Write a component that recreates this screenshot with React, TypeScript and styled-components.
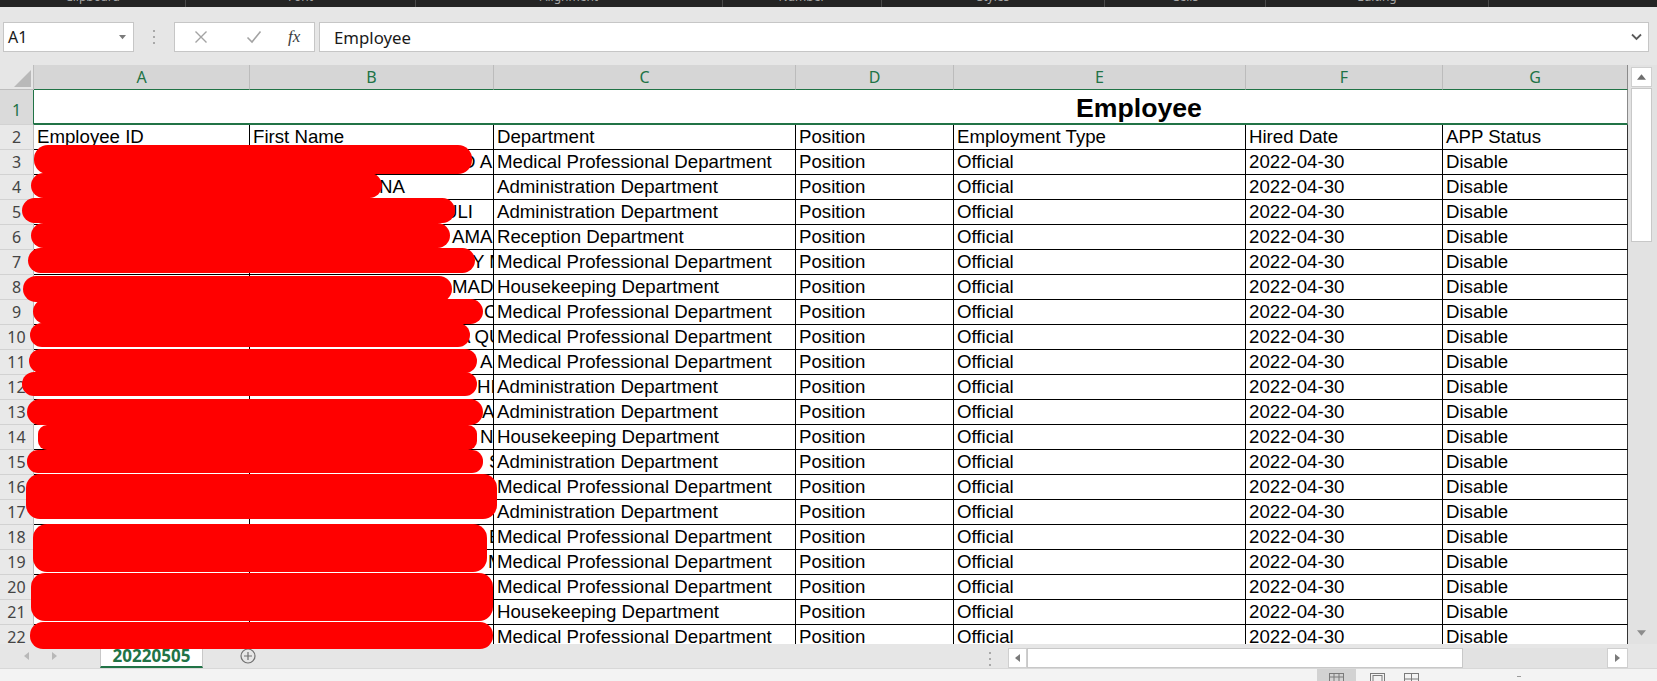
import React from "react";
import styled, { createGlobalStyle } from "styled-components";

const UI = `"Noto Sans", "Open Sans", sans-serif`;
const CELL = `"Liberation Sans", Arial, sans-serif`;
const GREEN = "#217346";
const COLS = [34, 216, 244, 302, 158, 292, 197, 185];
const GRID_COLS = COLS.map((c) => `${c}px`).join(" ");

const GlobalStyle = createGlobalStyle`
  html, body { margin: 0; padding: 0; background: #e6e6e6; overflow: hidden; }
  body { font-family: ${CELL}; }
`;

const Window = styled.div`
  position: relative;
  width: 1657px;
  height: 681px;
  overflow: hidden;
  background: #e6e6e6;
  display: flex;
  flex-direction: column;
`;

/* ---------- ribbon remnant ---------- */
const RibbonStrip = styled.div`
  flex: none;
  height: 7px;
  background: #242424;
  display: flex;
  overflow: hidden;
`;
const RibbonGroup = styled.div<{ $w: number }>`
  flex: none;
  width: ${(p) => p.$w}px;
  box-sizing: border-box;
  border-right: 1px solid #4a4a4a;
  display: flex;
  justify-content: center;
`;
const RibbonLabel = styled.span`
  font: 12px/14px ${UI};
  color: #a6a6a6;
  margin-top: -10px;
`;

/* ---------- formula bar ---------- */
const FormulaBar = styled.div`
  flex: none;
  height: 58px;
  box-sizing: border-box;
  padding: 15px 8px 0 3px;
  display: flex;
  align-items: flex-start;
`;
const NameBox = styled.div`
  flex: none;
  width: 131px;
  height: 30px;
  box-sizing: border-box;
  background: #fff;
  border: 1px solid #c6c6c6;
  display: flex;
  align-items: center;
  justify-content: space-between;
  padding: 0 7px 0 4px;
  font: 16px ${UI};
  color: #1a1a1a;
`;
const Splitter = styled.div<{ $w: number }>`
  flex: none;
  width: ${(p) => p.$w}px;
  height: 30px;
  display: flex;
  align-items: center;
  justify-content: center;
`;
const FnBox = styled.div`
  flex: none;
  width: 141px;
  height: 30px;
  box-sizing: border-box;
  background: #fff;
  border: 1px solid #c6c6c6;
  display: flex;
  align-items: center;
  padding-left: 19px;
`;
const FnSlot = styled.div<{ $w: number }>`
  flex: none;
  width: ${(p) => p.$w}px;
  display: flex;
  align-items: center;
`;
const FxLabel = styled.span`
  font: italic 17px "Liberation Serif", "Times New Roman", serif;
  color: #3c3c3c;
`;
const FormulaInput = styled.div`
  flex: 1;
  margin-left: 4px;
  height: 30px;
  box-sizing: border-box;
  background: #fff;
  border: 1px solid #c6c6c6;
  display: flex;
  align-items: center;
  justify-content: space-between;
  padding: 0 6px 0 14px;
  font: 16.8px ${UI};
  color: #1a1a1a;
`;

/* ---------- sheet ---------- */
const GridArea = styled.div`
  flex: none;
  height: 579px;
  display: flex;
`;
const Sheet = styled.div`
  flex: none;
  width: 1628px;
  background: #fff;
  overflow: hidden;
  display: flex;
  flex-direction: column;
`;
const Row = styled.div<{ $h: number }>`
  flex: none;
  display: grid;
  grid-template-columns: ${GRID_COLS};
  height: ${(p) => p.$h}px;
`;
const Corner = styled.div`
  box-sizing: border-box;
  background: #e6e6e6;
  border-right: 1px solid #bdbdbd;
  border-bottom: 1px solid #bdbdbd;
  display: flex;
  align-items: flex-end;
  justify-content: flex-end;
  padding: 0 2px 2px 0;
`;
const ColHeader = styled.div<{ $last?: boolean }>`
  box-sizing: border-box;
  background: #d6d6d6;
  border-right: 1px solid ${(p) => (p.$last ? "#8a8a8a" : "#bcbcbc")};
  border-bottom: 1px solid ${GREEN};
  display: flex;
  align-items: center;
  justify-content: center;
  font: 16px ${UI};
  color: ${GREEN};
`;
const RowHeader = styled.div<{ $sel?: boolean }>`
  box-sizing: border-box;
  background: ${(p) => (p.$sel ? "#dadada" : "#e9e9e9")};
  border-right: 1px solid ${(p) => (p.$sel ? GREEN : "#bdbdbd")};
  border-bottom: 1px solid #d2d2d2;
  display: flex;
  align-items: ${(p) => (p.$sel ? "flex-end" : "center")};
  padding-bottom: ${(p) => (p.$sel ? "3px" : "0")};
  justify-content: center;
  font: 16px ${UI};
  color: ${(p) => (p.$sel ? GREEN : "#444")};
`;
const TitleCell = styled.div`
  grid-column: 2 / span 7;
  box-sizing: border-box;
  background: #fff;
  border-bottom: 2px solid ${GREEN};
  border-right: 1px solid #8a8a8a;
  display: flex;
  align-items: flex-end;
  padding-left: 1042px;
  font: bold 26.67px/30px ${CELL};
  color: #000;
`;
const DataCell = styled.div<{ $indent?: number; $last?: boolean }>`
  box-sizing: border-box;
  background: #fff;
  border-right: 1px solid ${(p) => (p.$last ? "#333" : "#000")};
  border-bottom: 1px solid #000;
  padding-left: ${(p) => p.$indent ?? 3}px;
  font: 18.67px/24px ${CELL};
  color: #000;
  white-space: nowrap;
  overflow: hidden;
`;

/* ---------- scrollbars ---------- */
const VScroll = styled.div`
  flex: none;
  width: 29px;
  background: #e2e2e2;
  display: flex;
  flex-direction: column;
  padding-left: 3px;
  box-sizing: border-box;
`;
const VButton = styled.div`
  width: 21px;
  height: 20px;
  margin-top: 2px;
  box-sizing: border-box;
  background: #fff;
  border: 1px solid #cfcfcf;
  display: flex;
  align-items: center;
  justify-content: center;
`;
const VThumb = styled.div`
  width: 21px;
  height: 154px;
  margin-top: 1px;
  box-sizing: border-box;
  background: #fff;
  border: 1px solid #c8c8c8;
`;
const VBottomArrow = styled.div`
  margin-top: auto;
  width: 21px;
  height: 22px;
  display: flex;
  align-items: center;
  justify-content: center;
`;

/* ---------- tab bar ---------- */
const TabBar = styled.div`
  flex: none;
  height: 24px;
  display: flex;
  align-items: stretch;
  background: #e6e6e6;
`;
const NavArrows = styled.div`
  flex: none;
  width: 100px;
  box-sizing: border-box;
  display: flex;
  align-items: center;
  padding-left: 23px;
  gap: 20px;
`;
const SheetTab = styled.div`
  flex: none;
  width: 103px;
  margin-top: 1px;
  box-sizing: border-box;
  background: #fff;
  border-left: 1px solid #c8c8c8;
  border-right: 1px solid #c8c8c8;
  border-bottom: 2px solid ${GREEN};
  display: flex;
  align-items: center;
  justify-content: center;
  font: bold 17px ${UI};
  color: ${GREEN};
`;
const AddSheet = styled.div`
  flex: none;
  margin-left: 37px;
  width: 16px;
  display: flex;
  align-items: center;
  justify-content: center;
`;
const Spacer = styled.div`
  flex: 1;
`;
const HScroll = styled.div`
  flex: none;
  width: 620px;
  height: 20px;
  margin: 4px 29px 0 10px;
  display: flex;
  background: #e2e2e2;
`;
const HButton = styled.div<{ $w: number }>`
  flex: none;
  width: ${(p) => p.$w}px;
  box-sizing: border-box;
  background: #fff;
  border: 1px solid #cfcfcf;
  display: flex;
  align-items: center;
  justify-content: center;
`;
const HThumb = styled.div`
  flex: none;
  width: 436px;
  box-sizing: border-box;
  background: #fff;
  border: 1px solid #c8c8c8;
`;
const HTrack = styled.div`
  flex: 1;
`;

/* ---------- status bar ---------- */
const StatusBar = styled.div`
  flex: 1;
  box-sizing: border-box;
  background: #f3f3f3;
  border-top: 1px solid #d8d8d8;
  display: flex;
  align-items: flex-start;
  padding-left: 1317px;
  overflow: hidden;
`;
const ViewButton = styled.div<{ $active?: boolean; $w: number }>`
  flex: none;
  width: ${(p) => p.$w}px;
  height: 14px;
  background: ${(p) => (p.$active ? "#d2d2d2" : "transparent")};
  display: flex;
  justify-content: center;
  padding-top: 4px;
  box-sizing: border-box;
`;
const ZoomMark = styled.div`
  flex: none;
  margin-left: 94px;
  margin-top: 7px;
  width: 4px;
  height: 1px;
  background: #9a9a9a;
`;

/* ---------- redaction overlay ---------- */
const RedactLayer = styled.div`
  position: absolute;
  inset: 0;
  pointer-events: none;
`;
const Redaction = styled.div<{ $x: number; $y: number; $w: number; $h: number; $r: number }>`
  position: absolute;
  left: ${(p) => p.$x}px;
  top: ${(p) => p.$y}px;
  width: ${(p) => p.$w}px;
  height: ${(p) => p.$h}px;
  border-radius: ${(p) => p.$r}px;
  background: #ff0000;
`;

/* ---------- icons ---------- */
const Tri = ({ dir, color = "#8a8a8a", size = 8 }: { dir: "up" | "down" | "left" | "right"; color?: string; size?: number }) => {
  const pts =
    dir === "up"
      ? "0,6 8,6 4,1"
      : dir === "down"
      ? "0,1 8,1 4,6"
      : dir === "left"
      ? "6,0 6,8 1,4"
      : "1,0 1,8 6,4";
  return (
    <svg width={size} height={size} viewBox="0 0 8 8">
      <polygon points={pts} fill={color} />
    </svg>
  );
};

const Dots = () => (
  <svg width="4" height="16" viewBox="0 0 4 16">
    <rect x="1" y="1" width="2" height="2" fill="#a8a8a8" />
    <rect x="1" y="7" width="2" height="2" fill="#a8a8a8" />
    <rect x="1" y="13" width="2" height="2" fill="#a8a8a8" />
  </svg>
);

const CancelIcon = () => (
  <svg width="14" height="14" viewBox="0 0 14 14">
    <path d="M1.5 1.5 L12.5 12.5 M12.5 1.5 L1.5 12.5" stroke="#a3a3a3" strokeWidth="1.4" fill="none" />
  </svg>
);
const EnterIcon = () => (
  <svg width="16" height="14" viewBox="0 0 16 14">
    <path d="M1.5 7.5 L6 12 L14.5 1.5" stroke="#a3a3a3" strokeWidth="1.6" fill="none" />
  </svg>
);
const Chevron = () => (
  <svg width="11" height="8" viewBox="0 0 11 8">
    <path d="M1 1.5 L5.5 6 L10 1.5" stroke="#5a5a5a" strokeWidth="1.8" fill="none" />
  </svg>
);
const CornerTriangle = () => (
  <svg width="17" height="17" viewBox="0 0 17 17">
    <polygon points="17,0 17,17 0,17" fill="#b9b9b9" />
  </svg>
);
const PlusCircle = () => (
  <svg width="16" height="16" viewBox="0 0 16 16">
    <circle cx="8" cy="8" r="7" stroke="#707070" strokeWidth="1.2" fill="none" />
    <path d="M8 4 V12 M4 8 H12" stroke="#707070" strokeWidth="1.2" />
  </svg>
);
const ViewIcon = ({ kind }: { kind: number }) => (
  <svg width="15" height="12" viewBox="0 0 15 12">
    <rect x="0.5" y="0.5" width="14" height="11" stroke="#7a7a7a" fill="none" />
    {kind === 0 && <path d="M0.5 4 H14.5 M5 0.5 V11.5 M10 0.5 V11.5" stroke="#7a7a7a" />}
    {kind === 1 && <rect x="3" y="2.5" width="9" height="9" stroke="#7a7a7a" fill="none" />}
    {kind === 2 && <path d="M7.5 0.5 V11.5 M0.5 6 H14.5" stroke="#7a7a7a" />}
  </svg>
);

/* ---------- data ---------- */
const RIBBON = [
  { label: "Clipboard", w: 186 },
  { label: "Font", w: 230 },
  { label: "Alignment", w: 307 },
  { label: "Number", w: 159 },
  { label: "Styles", w: 223 },
  { label: "Cells", w: 161 },
  { label: "Editing", w: 223 },
];

const MPD = "Medical Professional Department";
const AD = "Administration Department";
const HD = "Housekeeping Department";
const RD = "Reception Department";

const DEPTS = [MPD, AD, AD, RD, MPD, HD, MPD, MPD, MPD, AD, AD, HD, AD, MPD, AD, MPD, MPD, MPD, HD, MPD];

// visible tail of column B names (text, absolute x where it starts)
const B_TAILS: Record<number, [string, number]> = {
  3: ["D A", 462],
  4: ["NA", 379],
  5: ["ULI", 444],
  6: ["AMAL", 452],
  7: ["Y M", 472],
  8: ["MADA", 452],
  9: ["CO", 484],
  10: ["A QU", 458],
  11: ["AN", 480],
  12: ["HI", 477],
  13: ["AL", 482],
  14: ["N", 480],
  15: ["S", 489],
  18: ["E", 489],
  19: ["M", 488],
};

const REDACTIONS = [
  [34, 145, 438, 29, 14],
  [31, 173, 351, 25, 13],
  [22, 198, 433, 25, 13],
  [31, 223, 419, 25, 13],
  [28, 248, 447, 25, 13],
  [23, 276, 429, 26, 13],
  [33, 299, 450, 25, 13],
  [30, 323, 440, 24, 12],
  [29, 349, 448, 24, 12],
  [22, 372, 455, 24, 12],
  [27, 399, 456, 26, 13],
  [38, 425, 439, 25, 9],
  [27, 450, 456, 23, 11],
  [26, 474, 471, 45, 14],
  [33, 524, 454, 48, 14],
  [31, 573, 462, 48, 14],
  [30, 622, 463, 27, 13],
];

const HEADERS = ["Employee ID", "First Name", "Department", "Position", "Employment Type", "Hired Date", "APP Status"];
const LETTERS = ["A", "B", "C", "D", "E", "F", "G"];

export default function App() {
  return (
    <Window>
      <GlobalStyle />
      <RibbonStrip>
        {RIBBON.map((g) => (
          <RibbonGroup key={g.label} $w={g.w}>
            <RibbonLabel>{g.label}</RibbonLabel>
          </RibbonGroup>
        ))}
      </RibbonStrip>

      <FormulaBar>
        <NameBox>
          <span>A1</span>
          <Tri dir="down" color="#7a7a7a" size={7} />
        </NameBox>
        <Splitter $w={40}>
          <Dots />
        </Splitter>
        <FnBox>
          <FnSlot $w={52}>
            <CancelIcon />
          </FnSlot>
          <FnSlot $w={42}>
            <EnterIcon />
          </FnSlot>
          <FnSlot $w={20}>
            <FxLabel>fx</FxLabel>
          </FnSlot>
        </FnBox>
        <FormulaInput>
          <span>Employee</span>
          <Chevron />
        </FormulaInput>
      </FormulaBar>

      <GridArea>
        <Sheet>
          <Row $h={25}>
            <Corner>
              <CornerTriangle />
            </Corner>
            {LETTERS.map((l, i) => (
              <ColHeader key={l} $last={i === LETTERS.length - 1}>
                {l}
              </ColHeader>
            ))}
          </Row>
          <Row $h={35}>
            <RowHeader $sel>1</RowHeader>
            <TitleCell>Employee</TitleCell>
          </Row>
          <Row $h={25}>
            <RowHeader>2</RowHeader>
            {HEADERS.map((h, i) => (
              <DataCell key={h} $last={i === HEADERS.length - 1}>
                {h}
              </DataCell>
            ))}
          </Row>
          {DEPTS.map((dept, idx) => {
            const n = idx + 3;
            const tail = B_TAILS[n];
            return (
              <Row key={n} $h={25}>
                <RowHeader>{n}</RowHeader>
                <DataCell />
                <DataCell $indent={tail ? tail[1] - 250 : 3}>{tail ? tail[0] : ""}</DataCell>
                <DataCell>{dept}</DataCell>
                <DataCell>Position</DataCell>
                <DataCell>Official</DataCell>
                <DataCell>2022-04-30</DataCell>
                <DataCell $last>Disable</DataCell>
              </Row>
            );
          })}
        </Sheet>
        <VScroll>
          <VButton>
            <Tri dir="up" color="#6e6e6e" size={9} />
          </VButton>
          <VThumb />
          <VBottomArrow>
            <Tri dir="down" color="#8c8c8c" size={9} />
          </VBottomArrow>
        </VScroll>
      </GridArea>

      <TabBar>
        <NavArrows>
          <Tri dir="left" color="#b8b8b8" size={8} />
          <Tri dir="right" color="#b8b8b8" size={8} />
        </NavArrows>
        <SheetTab>20220505</SheetTab>
        <AddSheet>
          <PlusCircle />
        </AddSheet>
        <Spacer />
        <Splitter $w={16}>
          <Dots />
        </Splitter>
        <HScroll>
          <HButton $w={19}>
            <Tri dir="left" color="#7a7a7a" size={8} />
          </HButton>
          <HThumb />
          <HTrack />
          <HButton $w={21}>
            <Tri dir="right" color="#7a7a7a" size={8} />
          </HButton>
        </HScroll>
      </TabBar>

      <StatusBar>
        <ViewButton $active $w={39}>
          <ViewIcon kind={0} />
        </ViewButton>
        <ViewButton $w={43}>
          <ViewIcon kind={1} />
        </ViewButton>
        <ViewButton $w={24}>
          <ViewIcon kind={2} />
        </ViewButton>
        <ZoomMark />
      </StatusBar>

      <RedactLayer>
        {REDACTIONS.map(([x, y, w, h, r], i) => (
          <Redaction key={i} $x={x} $y={y} $w={w} $h={h} $r={r} />
        ))}
      </RedactLayer>
    </Window>
  );
}
